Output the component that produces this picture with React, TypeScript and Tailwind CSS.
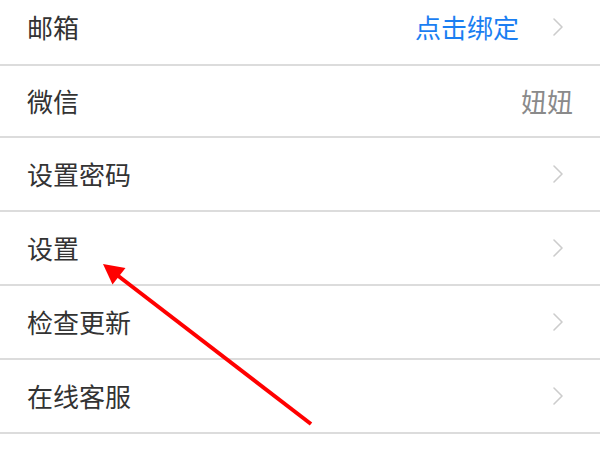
import { ReactNode } from "react";

interface SettingRowProps {
  label: string;
  value?: ReactNode;
  showChevron?: boolean;
  className: string;
}

function Chevron() {
  return (
    <svg viewBox="0 0 12 20" className="h-[20px] w-[12px]" fill="none" aria-hidden="true">
      <path d="M2 2l8 8-8 8" stroke="#cccccc" strokeWidth="1.6" strokeLinecap="round" strokeLinejoin="round" />
    </svg>
  );
}

function SettingRow({ label, value, showChevron = true, className }: SettingRowProps) {
  return (
    <div className={`flex items-center justify-between border-b-2 border-[#dcdcdc] pl-[27px] ${className}`}>
      <span className="text-[26px] leading-none text-[#333333]">{label}</span>
      <div className="flex items-center gap-[33px]">
        {value}
        {showChevron ? <Chevron /> : null}
      </div>
    </div>
  );
}

export default function App() {
  return (
    <div
      className="relative h-[450px] w-[600px] overflow-hidden bg-white"
      style={{ fontFamily: '"Noto Sans CJK SC", "Noto Sans", sans-serif' }}
    >
      <SettingRow
        label="邮箱"
        className="h-[66px] pb-[11px] pr-[36px]"
        value={<span className="text-[26px] leading-none text-[#1a7ef2]">点击绑定</span>}
      />
      <SettingRow
        label="微信"
        showChevron={false}
        className="h-[72px] pr-[27px]"
        value={<span className="text-[26px] leading-none text-[#8a8a8a]">妞妞</span>}
      />
      <SettingRow label="设置密码" className="h-[74px] pr-[36px]" />
      <SettingRow label="设置" className="h-[74px] pr-[36px]" />
      <SettingRow label="检查更新" className="h-[74px] pr-[36px]" />
      <SettingRow label="在线客服" className="h-[74px] pr-[36px]" />

      {/* annotation arrow drawn over the list */}
      <svg className="pointer-events-none absolute inset-0" width="600" height="450" viewBox="0 0 600 450" aria-hidden="true">
        <line x1="311" y1="424" x2="117" y2="275" stroke="#ff0000" strokeWidth="4" />
        <polygon points="103,264 125.5,268 112.5,284.5" fill="#ff0000" />
      </svg>
    </div>
  );
}
